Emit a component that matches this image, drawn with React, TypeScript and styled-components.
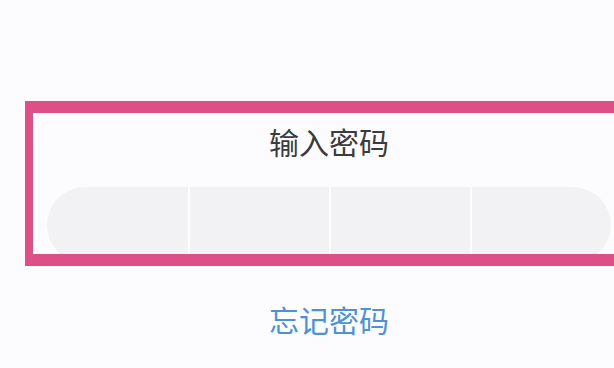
import React from "react";
import styled, { createGlobalStyle } from "styled-components";

const GlobalStyle = createGlobalStyle`
   html, body {
      margin: 0;
      padding: 0;
      background-color: #fcfbfe;
      font-family: "Noto Sans CJK SC", "Noto Sans", sans-serif;
   }
`;

const Page = styled.div`
   width: 614px;
   height: 368px;
   overflow: hidden;
   padding-top: 101px;
   box-sizing: border-box;
   display: flex;
   flex-direction: column;
`;

const Section = styled.div`
   position: relative;
   display: flex;
   flex-direction: column;
   padding-top: 20px;
`;

const Title = styled.div`
   width: 564px;
   margin-left: 47px;
   text-align: center;
   font-size: 30px;
   line-height: 40px;
   color: #3b3b3b;
`;

const CodeRow = styled.div`
   margin-top: 26px;
   margin-left: 47px;
   width: 564px;
   height: 76px;
   border-radius: 38px;
   overflow: hidden;
   display: grid;
   grid-template-columns: repeat(4, 1fr);
`;

const Cell = styled.div<{ $first?: boolean }>`
   background-color: #f2f2f4;
   border-left: ${(p) => (p.$first ? "none" : "2px solid #fdfdff")};
`;

// annotation frame drawn over the password block
const Highlight = styled.div`
   position: absolute;
   left: 25px;
   top: 0;
   right: -30px;
   height: 165px;
   box-sizing: border-box;
   border-left: 8px solid #dd4f87;
   border-top: 12px solid #dd4f87;
   border-bottom: 12px solid #dd4f87;
   pointer-events: none;
`;

const Forgot = styled.div`
   margin-top: 36px;
   width: 564px;
   margin-left: 47px;
   text-align: center;
   font-size: 30px;
   line-height: 40px;
   color: #4d93d2;
`;

export default function App() {
   return (
      <>
         <GlobalStyle />
         <Page>
            <Section>
               <Title>输入密码</Title>
               <CodeRow>
                  <Cell $first />
                  <Cell />
                  <Cell />
                  <Cell />
               </CodeRow>
               <Highlight />
            </Section>
            <Forgot>忘记密码</Forgot>
         </Page>
      </>
   );
}
